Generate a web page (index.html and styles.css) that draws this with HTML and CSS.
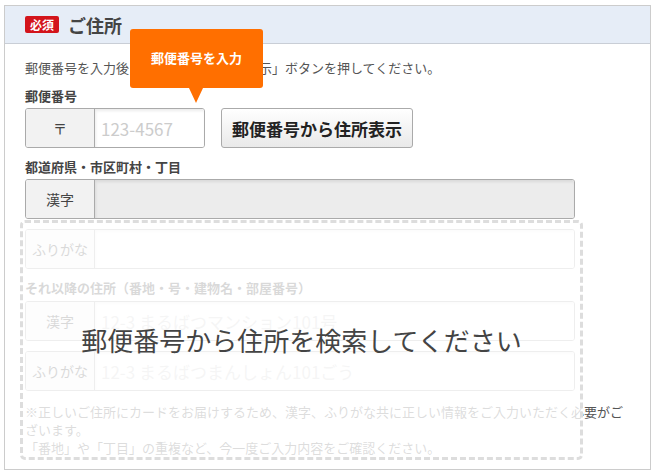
FILE: index.html
```html
<!DOCTYPE html>
<html lang="ja">
<head>
    <meta charset="UTF-8">
    <meta name="viewport" content="width=device-width, initial-scale=1.0">
    <title>ご住所</title>
    <link rel="stylesheet" href="styles.css">
</head>
<body>
    <div class="section">
        <div class="section-head">
            <span class="badge">必須</span>
            <span class="section-title">ご住所</span>
        </div>

        <div class="section-body">
            <div class="tip">郵便番号を入力</div>

            <p class="lead">郵便番号を入力後「郵便番号から住所表示」ボタンを押してください。</p>

            <div class="label">郵便番号</div>
            <div class="zip-row">
                <div class="field field-zip">
                    <span class="field-pre">〒</span>
                    <input class="field-input" type="text" placeholder="123-4567">
                </div>
                <button class="zip-btn" type="button">郵便番号から住所表示</button>
            </div>

            <div class="label">都道府県・市区町村・丁目</div>
            <div class="field field-off">
                <span class="field-pre">漢字</span>
                <input class="field-input" type="text" disabled>
            </div>

            <!-- 郵便番号検索前はロック -->
            <div class="locked">
                <div class="field field-gap">
                    <span class="field-pre">ふりがな</span>
                    <input class="field-input" type="text">
                </div>

                <div class="label">それ以降の住所（番地・号・建物名・部屋番号）</div>
                <div class="field">
                    <span class="field-pre">漢字</span>
                    <input class="field-input" type="text" placeholder="12-3 まるばつマンション101号">
                </div>
                <div class="field field-gap">
                    <span class="field-pre">ふりがな</span>
                    <input class="field-input" type="text" placeholder="12-3 まるばつまんしょん101ごう">
                </div>

                <p class="note">※正しいご住所にカードをお届けするため、漢字、ふりがな共に正しい情報をご入力いただく必要がございます。<br>「番地」や「丁目」の重複など、今一度ご入力内容をご確認ください。</p>

                <div class="locked-cover">郵便番号から住所を検索してください</div>
            </div>
        </div>
    </div>
</body>
</html>
```

FILE: styles.css
```css
/* ベース */
* {
    box-sizing: border-box;
}
body {
    margin: 5px 6px 0 4px;
    font-family: "Noto Sans CJK JP", "Noto Sans", sans-serif;
    color: #555;
    font-size: 13px;
    line-height: 18px;
    background-color: #fff;
}
.section {
    border: 1px solid #ccc;
}
.section-head {
    height: 38px;
    padding: 0 20px;
    display: flex;
    align-items: center;
    background-color: #e6edf7;
    border-bottom: 1px solid #c9ced6;
}
.badge {
    width: 34px;
    height: 17px;
    line-height: 17px;
    text-align: center;
    background-color: #d3141b;
    color: #fff;
    font-size: 12px;
    font-weight: bold;
    border-radius: 2px;
    margin-right: 9px;
}
.section-title {
    font-size: 18px;
    font-weight: bold;
    color: #444;
}
.section-body {
    position: relative;
    padding: 15px 20px 12px;
}
/* 吹き出し */
.tip {
    position: absolute;
    left: 125px;
    top: -15px;
    width: 133px;
    height: 59px;
    background-color: #ff6f00;
    color: #fff;
    font-weight: bold;
    font-size: 13px;
    border-radius: 3px;
    display: flex;
    align-items: center;
    justify-content: center;
    padding-bottom: 2px;
    z-index: 10;
}
.tip::after {
    content: "";
    position: absolute;
    left: 59px;
    top: 100%;
    border-left: 7px solid transparent;
    border-right: 7px solid transparent;
    border-top: 15px solid #ff6f00;
}
.lead {
    margin: 0;
}
.label {
    margin: 10px 0 3px;
    font-weight: bold;
    color: #444;
}
.zip-row {
    display: flex;
    gap: 16px;
}
.field {
    width: 550px;
    height: 40px;
    display: flex;
    border: 1px solid #aaa;
    border-radius: 3px;
    overflow: hidden;
}
.field-gap {
    margin-top: 10px;
}
.field-zip {
    width: 180px;
}
.field-pre {
    width: 69px;
    flex: none;
    display: flex;
    align-items: center;
    justify-content: center;
    background-color: #f2f2f2;
    border-right: 1px solid #aaa;
    color: #444;
    font-size: 14px;
}
.field-input {
    flex: 1;
    min-width: 0;
    border: none;
    outline: none;
    padding: 0 6px;
    font-family: inherit;
    font-size: 17px;
    color: #333;
    background-color: #fff;
    box-shadow: inset 1px 2px 3px rgba(0, 0, 0, 0.08);
}
.field-input::placeholder {
    color: #ccc;
}
.field-off .field-input {
    background-color: #ececec;
}
.zip-btn {
    height: 40px;
    padding: 0 10px;
    border: 1px solid #aaa;
    border-radius: 3px;
    background: linear-gradient(#fff, #e9e9e9);
    font-family: inherit;
    font-size: 17px;
    font-weight: bold;
    color: #222;
    cursor: pointer;
}
/* ロック部分 */
.locked {
    position: relative;
}
.locked .label {
    margin-bottom: 4px;
}
.note {
    margin: 12px 0 0;
}
.locked-cover {
    position: absolute;
    top: -9px;
    left: -5px;
    bottom: -3px;
    width: 563px;
    border: 3px dashed #ddd;
    border-radius: 5px;
    background-color: rgba(255, 255, 255, 0.8);
    display: flex;
    align-items: center;
    justify-content: center;
    font-size: 26px;
    color: #444;
    line-height: 1;
}
```
